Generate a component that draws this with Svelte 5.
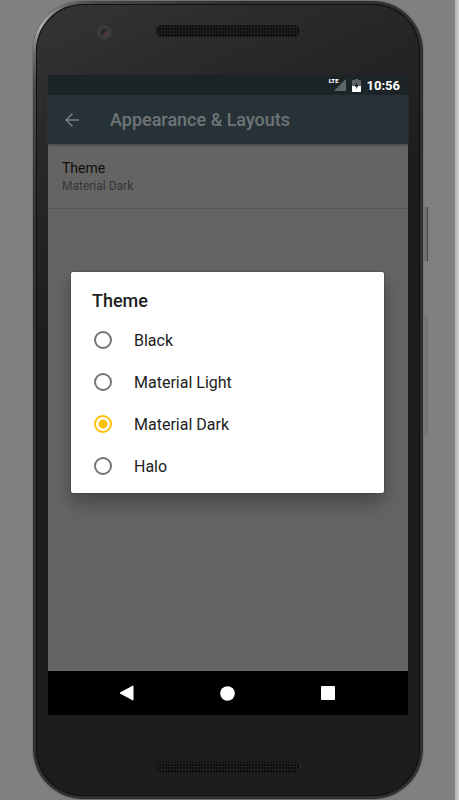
<script lang="ts">
  // Themes offered in the dialog
  const themes: string[] = ['Black', 'Material Light', 'Material Dark', 'Halo'];
  let selected = $state('Material Dark');
</script>

<main>
  <div class="phone">
    <span class="side-button power"></span>
    <span class="side-button volume"></span>

    <div class="bezel top">
      <span class="camera"></span>
      <span class="speaker"></span>
    </div>

    <div class="screen">
      <div class="status-bar">
        <span class="lte">LTE</span>
        <svg class="signal" width="12" height="12" viewBox="0 0 12 12">
          <path d="M12 0v12H0z" fill="#5f6668" />
        </svg>
        <svg class="battery" width="9" height="13" viewBox="0 0 9 13">
          <path d="M3 0h3v1h2.2q.8 0 .8.8V7H0V1.800q0-.8.8-.8H3z" fill="#5f6668" />
          <path d="M0 7h9v5.200q0 .8-.8.8H.8q-.8 0-.8-.8z" fill="#fff" />
          <path d="M5 3 2.600 7.400h1.700v2.800l2.300-4.200H5z" fill="#1d2427" />
        </svg>
        <span class="clock">10:56</span>
      </div>

      <header class="app-bar">
        <button class="back" aria-label="Back">
          <svg width="14" height="14" viewBox="0 0 14 14">
            <path d="M14 7H1.500M7.400 .7 1.100 7l6.300 6.300" fill="none" stroke="#757b7e" stroke-width="1.600" />
          </svg>
        </button>
        <h1>Appearance &amp; Layouts</h1>
      </header>

      <section class="content">
        <button class="preference">
          <span class="name">Theme</span>
          <span class="value">{selected}</span>
        </button>
      </section>

      <nav class="nav-bar">
        <button aria-label="Back">
          <svg width="15" height="16" viewBox="0 0 15 16"><path d="M14 1v14L1 8z" fill="#fff" stroke="#fff" stroke-linejoin="round" /></svg>
        </button>
        <button aria-label="Home">
          <svg width="15" height="15" viewBox="0 0 15 15"><circle cx="7.500" cy="7.500" r="7.300" fill="#fff" /></svg>
        </button>
        <button aria-label="Recent apps">
          <svg width="14" height="14" viewBox="0 0 14 14"><rect width="14" height="14" rx="1" fill="#fff" /></svg>
        </button>
      </nav>

      <div class="overlay">
        <div class="dialog" role="dialog" aria-labelledby="dialog-title">
          <h2 id="dialog-title">Theme</h2>
          {#each themes as theme}
            <label>
              <input type="radio" name="theme" value={theme} bind:group={selected} />
              <span>{theme}</span>
            </label>
          {/each}
        </div>
      </div>
    </div>

    <div class="bezel bottom">
      <span class="speaker"></span>
    </div>
  </div>
</main>

<style>
  :global(body) {
    margin: 0;
    background: #808080;
  }

  main {
    box-sizing: border-box;
    display: flex;
    min-height: 100vh;
    padding: 1px 36px 1px 33px;
    background: linear-gradient(to left, #d2d2d2, #b0b0b0 4px, #808080 4px);
    font-family: Roboto, "Liberation Sans", sans-serif;
  }

  button {
    border: 0;
    padding: 0;
    background: none;
    font-family: inherit;
  }

  svg {
    display: block;
  }

  /* Phone body, the second background is the metal rim */
  .phone {
    position: relative;
    flex: 1;
    display: flex;
    flex-direction: column;
    padding: 0 12px;
    border: 3px solid transparent;
    border-radius: 50px;
    background:
      linear-gradient(155deg, #353536, #2b2b2b 12%, #1c1c1c 36%, #1d1d1e) padding-box,
      radial-gradient(circle at 8px 24px, #b0b0b0, #6a6a6a 30px, #484848 60px, #303030 200px) border-box;
    box-shadow: inset 0 0 0 1px #101010, 0 0 2px #4c4c4c;
  }

  .side-button {
    position: absolute;
    box-sizing: border-box;
    left: calc(100% + 3px);
    width: 5px;
    border-right: 1px solid #484444;
    background: #716f6f;
  }

  .power {
    top: 203px;
    height: 54px;
  }

  .volume {
    top: 312px;
    height: 119px;
    border-color: #6c6c6c;
    background: #777;
  }

  .bezel {
    box-sizing: border-box;
    display: grid;
    grid-template-columns: 1fr 144px 1fr;
  }

  .top {
    height: 71px;
    padding-top: 21px;
  }

  .bottom {
    height: 81px;
    padding-top: 46px;
  }

  .camera {
    width: 7px;
    height: 7px;
    justify-self: end;
    margin-right: 44px;
    border: 4px solid #3c3b3c;
    border-radius: 50%;
    background: radial-gradient(circle at 70% 65%, #6b4a54, #24202c 40%) border-box;
  }

  .speaker {
    grid-column: 2;
    height: 12px;
    border-radius: 6px;
    background: radial-gradient(circle at 1px 1px, #0c0c0c 1px, #202020 1px) 0 0 / 3px 3px;
    box-shadow: inset 0 0 0 1px #1a1a1a, 1px 0 0 #303030;
  }

  /* Screen */
  .screen {
    position: relative;
    flex: 1;
    display: flex;
    flex-direction: column;
    background: #646464;
  }

  .status-bar {
    display: flex;
    align-items: center;
    height: 20px;
    padding-right: 8px;
    background: #1d2427;
    color: #fff;
  }

  .lte {
    align-self: flex-start;
    margin: 2px -5px 0 auto;
    font-size: 6px;
    font-weight: 900;
    line-height: 8px;
    z-index: 1;
  }

  .battery {
    margin: 0 6px;
  }

  .clock {
    font-size: 13px;
    font-weight: 700;
  }

  .app-bar {
    display: flex;
    align-items: center;
    height: 49px;
    padding: 0 17px;
    background: #273238;
    box-shadow: 0 1px 2px #404040;
  }

  .back {
    width: 14px;
    margin-right: 31px;
  }

  h1 {
    margin: 0;
    color: #6f7476;
    font-size: 18px;
    font-weight: 500;
    line-height: 22px;
  }

  .content {
    flex: 1;
  }

  .preference {
    display: flex;
    flex-direction: column;
    align-items: flex-start;
    width: 100%;
    padding: 15px 14px 13px;
    border-bottom: 1px solid #565656;
    text-align: left;
  }

  .name {
    color: #0d0d0d;
    font-size: 14px;
    line-height: 18px;
  }

  .value {
    color: #363636;
    font-size: 12px;
    line-height: 18px;
  }

  .nav-bar {
    display: flex;
    justify-content: center;
    align-items: center;
    gap: 86px;
    height: 44px;
    padding-right: 2px;
    background: #000;
  }

  .nav-bar button {
    display: flex;
    justify-content: center;
    width: 15px;
  }

  /* Dialog, centred between the status bar and the navigation bar */
  .overlay {
    position: absolute;
    inset: 20px 0 44px;
    display: flex;
    align-items: center;
    padding: 0 24px 2px 23px;
  }

  .dialog {
    flex: 1;
    padding: 0 21px 6px;
    border-radius: 2px;
    background: #fff;
    box-shadow: 0 10px 18px rgba(0, 0, 0, 0.3), 0 0 2px rgba(0, 0, 0, 0.4);
  }

  h2 {
    margin: 0;
    padding: 17px 0 6px;
    color: #212121;
    font-size: 18px;
    font-weight: 500;
    line-height: 24px;
  }

  label {
    display: flex;
    align-items: center;
    gap: 22px;
    height: 42px;
    color: #212121;
    font-size: 16px;
  }

  label span {
    padding-top: 2px;
  }

  input {
    appearance: none;
    box-sizing: border-box;
    width: 18px;
    height: 18px;
    margin: 0 0 0 2px;
    border: 2px solid #757575;
    border-radius: 50%;
  }

  input:checked {
    border-color: #ffc107;
    background: radial-gradient(circle, #ffc107 4px, #fff 5px);
  }
</style>
